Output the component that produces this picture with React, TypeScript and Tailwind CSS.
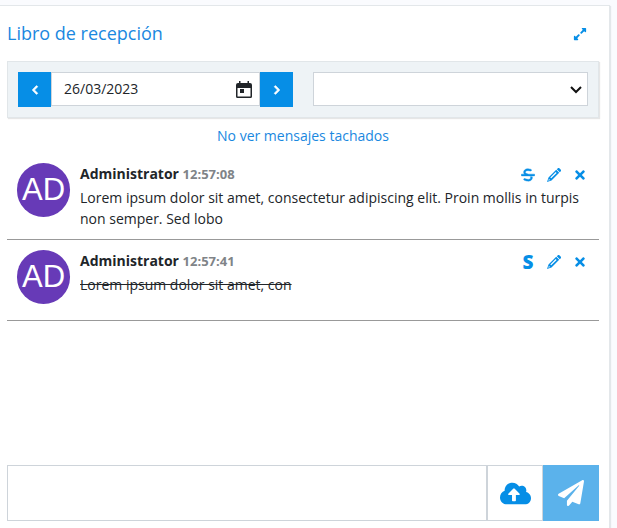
import { useState } from "react";
import type { ReactNode } from "react";
import {
  FaChevronLeft,
  FaChevronRight,
  FaCloudUploadAlt,
  FaExpandAlt,
  FaPaperPlane,
  FaTimes,
} from "react-icons/fa";
import { FaStrikethrough } from "react-icons/fa6";

type Message = { id: number; author: string; time: string; text: string; struck: boolean };

const initialMessages: Message[] = [
  {
    id: 1,
    author: "Administrator",
    time: "12:57:08",
    text: "Lorem ipsum dolor sit amet, consectetur adipiscing elit. Proin mollis in turpis non semper. Sed lobo",
    struck: false,
  },
  { id: 2, author: "Administrator", time: "12:57:41", text: "Lorem ipsum dolor sit amet, con", struck: true },
];

function ActionButton({ label, onClick, children }: { label: string; onClick?: () => void; children: ReactNode }) {
  return (
    <button type="button" aria-label={label} onClick={onClick} className="flex h-4 w-[14px] items-center justify-center text-[#068ee6]">
      {children}
    </button>
  );
}

function PencilIcon() {
  return (
    <svg viewBox="0 0 14 14" className="h-[14px] w-[14px] shrink-0" fill="currentColor" aria-hidden="true">
      <path d="M9.800 1.200l.8-.8a1.400 1.400 0 0 1 2 0l1 1a1.400 1.400 0 0 1 0 2l-.8.8z" />
      <path fillRule="evenodd" d="M9.200 1.800l3 3L4.500 12.500 0 14l1.500-4.500zM8.700 4L3.300 9.400l.9.900L9.600 4.900zM1.900 10.900l-.6 1.800 1.800-.6z" />
    </svg>
  );
}

function CalendarIcon() {
  return (
    <svg viewBox="0 0 16 18" className="h-[18px] w-4" fill="#212529" aria-hidden="true">
      <path
        fillRule="evenodd"
        d="M3 0h1.500v2h7V0H13v2h1a2 2 0 0 1 2 2v11.500a1.500 1.500 0 0 1-1.500 1.500h-13A1.500 1.500 0 0 1 0 15.500V4a2 2 0 0 1 2-2h1zM1.500 7v8.500h13V7z"
      />
      <path d="M4 8h4v4H4z" />
    </svg>
  );
}

function MessageRow({ message, onToggle }: { message: Message; onToggle: () => void }) {
  return (
    <li className="flex min-h-[81px] gap-[10px] border-b border-[#999] pt-[10px] pr-3 pb-[10px] pl-[10px]">
      <div className="flex h-[54px] w-[53px] shrink-0 items-center justify-center rounded-full bg-[#673ab7] font-['Liberation_Sans',Arial,sans-serif] text-[31px] text-white">
        AD
      </div>
      <div className="min-w-0 flex-1">
        <div className="flex items-center justify-between pb-[2px]">
          <h2 className="text-[14px] leading-[22px] font-bold text-[#212529]">
            {message.author} <time className="text-[13px] text-[#808488]">{message.time}</time>
          </h2>
          <div className="flex items-center gap-3 pt-[1px]">
            <ActionButton label={message.struck ? "Quitar tachado" : "Tachar"} onClick={onToggle}>
              {message.struck ? (
                <span className="text-[19px] leading-4 font-extrabold">S</span>
              ) : (
                <FaStrikethrough size={14} stroke="currentColor" strokeWidth={16} />
              )}
            </ActionButton>
            <ActionButton label="Editar">
              <PencilIcon />
            </ActionButton>
            <ActionButton label="Eliminar">
              <FaTimes size={14} />
            </ActionButton>
          </div>
        </div>
        <p className={message.struck ? "leading-[21px] line-through" : "leading-[21px]"}>{message.text}</p>
      </div>
    </li>
  );
}

export default function App() {
  const [messages, setMessages] = useState(initialMessages);
  const [showStruck, setShowStruck] = useState(true);
  const toggle = (id: number) =>
    setMessages((list) => list.map((m) => (m.id === id ? { ...m, struck: !m.struck } : m)));

  return (
    <div className="min-h-screen overflow-hidden bg-[#fafbfe] pt-[5px] pr-[7px] font-['Open_Sans','Noto_Sans',sans-serif] text-[14px] text-[#212529]">
      <main className="flex min-h-[calc(100vh-5px)] flex-col border-t border-r border-[#e3e7ea] bg-white pr-[10px] pb-[7px] pl-[7px] shadow-[1px_1px_1px_#e3e7ea]">
        <header className="flex h-[55px] items-center justify-between pr-3">
          <h1 className="text-[18px] text-[#1a88df]">Libro de recepción</h1>
          <button type="button" aria-label="Ampliar" className="text-[#068ee6]">
            <FaExpandAlt size={14} />
          </button>
        </header>

        <section className="grid grid-cols-2 gap-5 border border-[#e1e6e9] bg-[#eef3f6] p-[10px] shadow-[1px_1px_1px_#e6e6e6]">
          <div className="flex">
            <button type="button" aria-label="Día anterior" className="flex h-[35px] w-[33px] shrink-0 items-center justify-center bg-[#068ee6] text-white">
              <FaChevronLeft size={10} stroke="currentColor" strokeWidth={40} />
            </button>
            <div className="flex h-[34px] min-w-0 flex-1 items-center border border-[#ced4da] bg-white pr-[7px]">
              <input aria-label="Fecha" defaultValue="26/03/2023" className="h-full min-w-0 flex-1 pb-[2px] pl-3 outline-none" />
              <button type="button" aria-label="Abrir calendario" className="pt-[2px]">
                <CalendarIcon />
              </button>
            </div>
            <button type="button" aria-label="Día siguiente" className="flex h-[35px] w-[33px] shrink-0 items-center justify-center bg-[#068ee6] text-white">
              <FaChevronRight size={10} stroke="currentColor" strokeWidth={40} />
            </button>
          </div>
          <div className="grid">
            <select aria-label="Filtro" className="col-start-1 row-start-1 h-[34px] w-full appearance-none border border-[#ced4da] bg-white px-3">
              <option value=""></option>
            </select>
            <svg viewBox="0 0 12 8" className="pointer-events-none col-start-1 row-start-1 mt-[14px] mr-[6px] h-2 w-3 justify-self-end" fill="none" stroke="#111" strokeWidth="2" aria-hidden="true">
              <path d="M1 1l5 5 5-5" />
            </svg>
          </div>
        </section>

        <div className="flex h-[35px] items-center justify-center">
          <button type="button" onClick={() => setShowStruck(!showStruck)} className="text-[#1a88df]">
            {showStruck ? "No ver mensajes tachados" : "Ver mensajes tachados"}
          </button>
        </div>

        <ul className="flex-1">
          {messages
            .filter((m) => showStruck || !m.struck)
            .map((m) => (
              <MessageRow key={m.id} message={m} onToggle={() => toggle(m.id)} />
            ))}
        </ul>

        <form className="flex h-14" onSubmit={(e) => e.preventDefault()}>
          <textarea aria-label="Mensaje" className="min-w-0 flex-1 resize-none border border-[#ced4da] p-2 outline-none" />
          <button type="button" aria-label="Subir archivo" className="flex w-14 shrink-0 items-center justify-center border border-[#ced4da] text-[#068ee6]">
            <FaCloudUploadAlt className="h-[25px] w-[31px]" />
          </button>
          <button type="submit" aria-label="Enviar" className="flex w-14 shrink-0 items-center justify-center bg-[#5bb2eb] text-white">
            <FaPaperPlane size={26} />
          </button>
        </form>
      </main>
    </div>
  );
}
